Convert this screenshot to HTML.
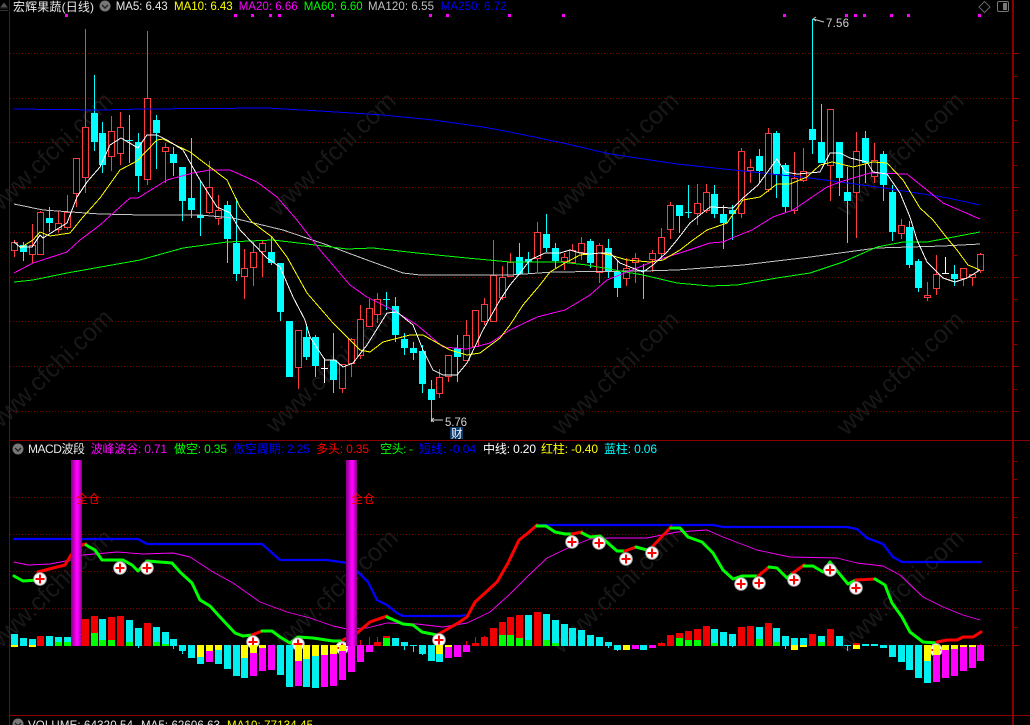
<!DOCTYPE html>
<html><head><meta charset="utf-8"><style>
html,body{margin:0;padding:0;background:#000;width:1030px;height:725px;overflow:hidden}
svg{display:block;position:absolute;left:0;top:0}
text{font-family:"Liberation Sans","Noto Sans CJK SC",sans-serif;font-size:11.5px;white-space:pre}
.wm text{font-size:25px;fill:#181818}
#ma polyline{shape-rendering:crispEdges}
</style></head><body>
<svg id="s" width="1030" height="725" viewBox="0 0 1030 725" xmlns="http://www.w3.org/2000/svg">
<defs><linearGradient id="pg" x1="0" x2="1" y1="0" y2="0"><stop offset="0" stop-color="#800080"/><stop offset=".5" stop-color="#ff00ff"/><stop offset=".62" stop-color="#ff00ff"/><stop offset="1" stop-color="#800080"/></linearGradient></defs>
<g class="wm">
<text transform="translate(55 160) rotate(-44)" text-anchor="middle">www.cfchi.com</text>
<text transform="translate(338 160) rotate(-44)" text-anchor="middle">www.cfchi.com</text>
<text transform="translate(621 160) rotate(-44)" text-anchor="middle">www.cfchi.com</text>
<text transform="translate(906 160) rotate(-44)" text-anchor="middle">www.cfchi.com</text>
<text transform="translate(55 377) rotate(-44)" text-anchor="middle">www.cfchi.com</text>
<text transform="translate(335 377) rotate(-44)" text-anchor="middle">www.cfchi.com</text>
<text transform="translate(621 379) rotate(-44)" text-anchor="middle">www.cfchi.com</text>
<text transform="translate(906 379) rotate(-44)" text-anchor="middle">www.cfchi.com</text>
<text transform="translate(55 597) rotate(-44)" text-anchor="middle">www.cfchi.com</text>
<text transform="translate(340 597) rotate(-44)" text-anchor="middle">www.cfchi.com</text>
<text transform="translate(621 597) rotate(-44)" text-anchor="middle">www.cfchi.com</text>
<text transform="translate(906 597) rotate(-44)" text-anchor="middle">www.cfchi.com</text>
</g>
<g id="grid"></g>
<g id="frame" fill="#8a0000">
<rect x="9" y="0" width="1" height="725"/>
<rect x="1012" y="0" width="2" height="725"/>
<rect x="10" y="440" width="1020" height="1"/>
<rect x="10" y="715" width="1020" height="1"/>
</g>
<g id="candles"></g>
<g id="ma" fill="none" stroke-width="1" stroke-linejoin="round"></g>
<g id="macd" fill="none" stroke-linejoin="round" stroke-linecap="round"></g>
<g id="hist"></g>
<g id="pill"></g>
<g id="sq" fill="#ff00ff"></g>

<path d="M0 8H8M4 3 1 7H7Z" fill="#555" stroke="#555" stroke-width=".6"/>
<rect x="0" y="10" width="8" height="1" fill="#333"/>
<text x="13" y="11" fill="#e8e8e8" textLength="81" style="font-size:12px">宏辉果蔬(日线)</text>
<circle cx="105" cy="6" r="5.5" fill="#777"/><path d="M102 5l3 3 3-3" fill="none" stroke="#222" stroke-width="1.4"/>
<text x="115.7" y="10" fill="#e8e8e8" textLength="52">MA5: 6.43</text>
<text x="174" y="10" fill="#ffff00" textLength="58.7">MA10: 6.43</text>
<text x="238.7" y="10" fill="#ff00ff" textLength="59">MA20: 6.66</text>
<text x="303.7" y="10" fill="#00ff00" textLength="59">MA60: 6.60</text>
<text x="368" y="10" fill="#c0c0c0" textLength="66">MA120: 6.55</text>
<text x="440.7" y="10" fill="#0000ff" textLength="66">MA250: 6.72</text>
<path d="M984.5 1.5 990 7 984.5 12.5 979 7Z" fill="none" stroke="#666"/>
<rect x="997.5" y="1.5" width="11" height="10" rx="1.5" fill="none" stroke="#777"/><rect x="1003" y="3" width="4" height="7" fill="#777"/>

<path d="M813 19 824 22M813 19l3-2M813 19l3 2" fill="none" stroke="#c8c8c8" stroke-width="1"/>
<text x="826" y="27" fill="#d0d0d0" textLength="23">7.56</text>
<path d="M431 420H443M431 420l3-2M431 420l3 2" fill="none" stroke="#d0d0d0" stroke-width="1"/>
<text x="445" y="426" fill="#d0d0d0" textLength="22">5.76</text>
<rect x="450" y="427" width="13" height="12" fill="#0b3a6b"/>
<text x="451" y="437.5" fill="#fff" style="font-size:11.5px">财</text>

<circle cx="18" cy="449" r="5.5" fill="#777"/><path d="M15 448l3 3 3-3" fill="none" stroke="#222" stroke-width="1.4"/>
<text x="28" y="453" fill="#e8e8e8" textLength="57" style="font-size:12px">MACD波段</text>
<text x="90.7" y="453" fill="#ff00ff" textLength="76.3" style="font-size:12px">波峰波谷: 0.71</text>
<text x="174" y="453" fill="#00ff00" textLength="53" style="font-size:12px">做空: 0.35</text>
<text x="233" y="453" fill="#0000ff" textLength="77" style="font-size:12px">做空周期: 2.25</text>
<text x="316" y="453" fill="#ff0000" textLength="53" style="font-size:12px">多头: 0.35</text>
<text x="380" y="453" fill="#00ff00" textLength="33" style="font-size:12px">空头: -</text>
<text x="419" y="453" fill="#0000ff" textLength="57" style="font-size:12px">短线: -0.04</text>
<text x="483" y="453" fill="#ffffff" textLength="53" style="font-size:12px">中线: 0.20</text>
<text x="541" y="453" fill="#ffff00" textLength="57" style="font-size:12px">红柱: -0.40</text>
<text x="604" y="453" fill="#00ffff" textLength="53" style="font-size:12px">蓝柱: 0.06</text>

<circle cx="18" cy="724" r="5.5" fill="#777"/><path d="M15 723l3 3 3-3" fill="none" stroke="#222" stroke-width="1.4"/>
<text x="28" y="729" fill="#e8e8e8" textLength="105">VOLUME: 64320.54</text>
<text x="141" y="729" fill="#e8e8e8" textLength="79">MA5: 62606.63</text>
<text x="227" y="729" fill="#ffff00" textLength="86">MA10: 77134.45</text>

<text x="76" y="503" fill="#ff0000" style="font-size:12px">全仓</text>
<text x="351" y="503" fill="#ff0000" style="font-size:12px">全仓</text>
</svg>
<script>
(function(){
var NS="http://www.w3.org/2000/svg",$=function(i){return document.getElementById(i)};
function el(p,t,a){var e=document.createElementNS(NS,t);for(var k in a)e.setAttribute(k,a[k]);$(p).appendChild(e);return e}
function col(i){return Math.floor(14.3+8.868*i)}
function rect(p,x,y,w,h,f){el(p,'rect',{x:x,y:y,width:w,height:Math.max(h,1),fill:f,'shape-rendering':'crispEdges'})}

/* signal squares */
[66,235,252,270,279,332,430,447,509,563,784,846,855,864,891,908,979].forEach(function(x){el('sq','rect',{x:x-1,y:14,width:3,height:3})});

/* grid */
[53,98,142,187,232,277,321,366,411,497,534,571,608,645].forEach(function(y){
 el('grid','line',{x1:10,x2:1012,y1:y+.5,y2:y+.5,stroke:'#7a0000','stroke-dasharray':'1 2','shape-rendering':'crispEdges'});
 rect('grid',1014,y,5,1,'#8a0000');
});
[76,120,165,210,255,299,344,389,461,479,517,553,590,627].forEach(function(y){rect('grid',1014,y,3,1,'#8a0000')});

/* candles: type, bodyTop, bodyBot, wickTop, wickBot */
var C=[['r',242,251,240,257],['c',245,252,242,261],['r',245,255,224,263],['r',212,255,211,255],['c',218,223,207,232],['r',223,230,211,233],['r',212,228,195,230],['r',158,194,158,207],['r',127,178,29,193],['c',113,142,75,151],
['c',133,165,122,173],['r',131,157,116,171],['r',127,154,112,165],['c',140,141,115,163],['c',142,176,133,192],['r',98,180,31,185],['c',120,133,115,169],['r',147,152,143,183],['c',154,163,147,176],['c',167,201,167,221],
['c',198,210,138,218],['c',215,218,180,236],['r',187,213,161,214],['r',210,219,195,225],['c',205,239,201,263],['c',243,274,198,281],['r',268,277,249,299],['r',252,268,242,286],['r',243,252,241,277],['c',252,263,237,265],
['c',263,312,263,321],['c',321,377,321,377],['r',330,368,330,389],['c',337,357,324,360],['c',337,366,335,377],['w',368,369,358,383],['c',360,380,333,393],['r',364,389,364,393],['r',339,364,338,377],['r',319,356,305,359],
['r',308,327,299,327],['r',299,315,293,323],['c',299,300,292,310],['c',306,335,297,342],['c',339,348,333,355],['c',348,353,342,360],['c',351,384,345,393],['c',389,400,380,422],['r',377,394,369,398],['r',355,377,355,382],
['c',348,357,335,382],['r',335,361,320,361],['r',310,347,310,347],['r',304,322,298,325],['r',275,322,240,322],['r',277,298,266,300],['r',262,277,253,277],['c',257,274,243,274],['c',259,262,252,273],['r',232,259,222,272],
['c',234,248,214,252],['c',248,261,243,268],['r',257,262,253,270],['r',250,263,244,264],['r',243,253,237,260],['c',241,263,239,268],['r',245,273,243,283],['c',248,272,239,278],['c',272,288,260,297],['r',268,279,258,286],
['r',258,263,253,283],['c',270,271,264,299],['r',253,260,250,272],['r',237,254,228,260],['r',205,230,202,239],['c',205,216,205,233],['c',212,213,185,218],['r',203,214,184,225],['r',192,211,184,213],['c',194,214,185,218],
['c',214,223,205,249],['c',210,214,205,240],['r',151,214,148,218],['r',167,171,159,183],['c',156,171,149,183],['r',133,190,128,192],['c',133,174,131,198],['c',165,207,163,212],['r',178,211,152,214],['r',171,181,148,182],
['c',129,140,19,154],['c',142,163,104,163],['r',109,166,109,201],['c',142,178,142,196],['c',192,201,167,243],['r',151,193,132,238],['c',138,163,131,183],['r',160,177,143,183],['c',154,185,151,201],['c',192,232,185,241],
['r',225,234,219,239],['c',227,265,221,268],['c',261,288,259,292],['r',295,298,282,301],['r',274,289,255,295],['w',273,274,257,274],['c',274,279,265,286],['r',268,279,268,286],['r',274,278,274,286],['r',254,271,253,273]];
var RED='#ff3c3c',CY='#00ffff';
C.forEach(function(c,i){var x=col(i),t=c[0],bt=c[1],bb=c[2],wt=c[3],wb=c[4];
 var f=t=='r'?RED:t=='c'?CY:'#fff';
 if(wt<bt)rect('candles',x,wt,1,bt-wt,f);
 if(wb>bb)rect('candles',x,bb,1,wb-bb,f);
 if(t=='r'){el('candles','rect',{x:x-2.5,y:bt+.5,width:6,height:Math.max(bb-bt-1,1),fill:'#000',stroke:f,'shape-rendering':'crispEdges'})}
 else rect('candles',x-3,bt,7,bb-bt,f);
});

/* MA lines */
function pl(g,pts,c,w){el(g,'polyline',{points:pts,stroke:c,'stroke-width':w||1})}
pl('ma','14,109 100,110 143,109 267,108 320,111 383,115 433,120 483,127 510,132 563,143 610,154 677,164 743,171 810,178 877,187 943,197 980,205','#0000ff',1);
pl('ma','14,204 43,210 100,214 143,215 200,215 233,218 283,230 327,245 367,260 403,273 420,275 510,275 553,272 643,271 677,270 743,265 810,257 877,248 943,246 980,244','#c4c4c4',1);
pl('ma','14,282 33,280 67,273 140,260 183,248 227,242 273,240 307,244 347,249 373,248 417,253 467,258 510,262 560,262 587,265 620,271 643,275 677,283 710,286 737,285 777,278 810,273 843,262 877,247 903,242 927,242 980,232','#00ff00',1);
pl('ma','14,273 33,263 67,252 80,240 100,225 130,198 138,198 167,180 193,173 210,170 230,170 257,182 277,197 297,220 307,233 320,250 350,285 367,297 393,310 417,325 443,347 467,349 490,343 510,330 537,317 565,310 590,295 607,280 627,272 657,260 683,252 710,243 723,242 732,238 752,230 773,217 793,210 827,187 840,182 870,173 907,174 943,203 980,219','#ff00ff');
pl('ma','20,248 33,240 40,232 50,236 70,233 83,217 100,198 120,170 137,161 157,140 163,139 190,152 227,180 240,207 252,222 272,237 287,257 307,293 333,323 360,350 370,352 383,342 410,335 423,335 450,350 467,355 480,353 500,338 510,325 523,305 540,285 550,272 565,263 580,255 600,253 610,255 627,260 650,262 663,260 680,250 693,240 707,230 727,223 743,200 760,197 777,184 790,184 807,177 820,165 832,162 853,167 873,162 887,163 903,180 920,208 933,220 947,238 957,250 968,265 980,270','#ffff00');
pl('ma','14,242 20,247 32,247 40,235 43,238 67,223 77,197 87,182 100,167 110,145 121,138 138,148 147,135 157,135 167,140 183,150 200,180 217,207 230,213 240,230 267,258 280,267 293,297 305,320 310,337 325,360 335,360 343,367 353,363 367,345 387,313 397,312 413,325 423,350 433,370 443,375 457,375 467,363 483,330 500,300 510,285 520,273 530,260 545,253 560,253 570,250 580,253 590,254 600,253 610,253 620,263 630,267 643,272 653,265 667,252 677,240 690,223 710,207 733,208 743,198 758,185 777,159 785,172 797,174 820,172 830,153 840,153 850,158 867,162 873,172 887,174 900,193 910,217 917,240 927,262 943,278 955,282 967,278 980,270','#ffffff');

/* MACD lines */
var mg=pl('macd','14,562 28,565 50,564 71,560 83,555 117,552 143,554 173,553 190,557 213,572 233,583 260,602 287,612 310,618 333,626 347,629 367,628 387,623 417,624 443,627 467,623 490,612 510,594 527,577 547,558 570,547 590,539 610,538 647,538 677,532 707,530 723,537 757,550 790,557 837,558 857,563 883,566 900,575 923,597 943,607 963,615 980,620','#ff00ff',.9);
pl('macd','14,539 138,539 147,544 262,544 280,560 327,560 347,563 357,571 368,582 377,600 387,605 397,613 403,616 460,616 465,615','#0000ff',2.3);
pl('macd','538,525 713,525 723,527 847,527 857,529 867,538 883,544 893,557 902,562 981,562','#0000ff',2.3);
var G='#00ff00',R='#ff0000',L=[
[G,'14,576 23,581 38,580'],[R,'38,572 53,568 65,565 71,555 82,545 86,544'],
[G,'86,545 95,550 102,560 123,560 132,565 138,571 147,561 172,563 180,572 192,583 200,600 210,606 220,617 235,633 243,636 252,635'],
[R,'252,635 262,631'],[G,'262,631 272,631 280,637 290,643 298,637 313,638 333,641 343,641'],
[R,'343,640 357,633 370,622 387,616'],[G,'387,617 403,624 413,625 422,632 437,635'],
[R,'437,635 458,623 467,617 475,602 497,582 508,563 519,540 528,533 537,525'],
[G,'537,526 546,526 555,532 565,534 572,534'],[R,'572,534 582,532'],[G,'582,533 590,537 600,536 617,551 625,551'],
[R,'625,551 636,547'],[G,'636,547 647,550 652,547'],[R,'652,547 671,527'],
[G,'671,528 680,528 688,537 702,542 713,553 723,570 733,579 742,576 758,576'],[R,'758,576 769,567'],
[G,'769,567 777,568 787,578 793,573'],[R,'793,573 804,565'],[G,'804,566 813,566 823,572 830,562 838,572 848,584 856,580'],
[R,'856,580 875,579'],[G,'875,579 885,585 892,603 902,617 910,632 923,642 937,643'],
[R,'937,642 947,640 957,640 963,637 973,637 981,632']];
L.forEach(function(l){pl('macd',l[1],l[0],3)});

/* plus markers (behind histogram) */
[[40,579],[120,568],[147,568],[253,642],[298,644],[342,648],[439,640],[572,542],[599,543],[626,559],[652,553],[741,584],[759,583],[794,580],[830,570],[856,588],[936,650]].forEach(function(p){
 el('macd','circle',{cx:p[0],cy:p[1],r:6.3,fill:'#fff',stroke:'#aaa','stroke-width':1});
 el('macd','path',{d:'M'+(p[0]-4.5)+' '+p[1]+'H'+(p[0]+4.5)+'M'+p[0]+' '+(p[1]-4.5)+'V'+(p[1]+4.5),stroke:'#ff0000','stroke-width':2,'stroke-linecap':'butt'});
});

/* histogram: lower-case = 7px wide segment, upper-case = 1px thin; z values in 3x relative to y=440 */
var H=["c582-615 y615-621","c594-618","c597-615 y615-621","r588-618","c588-618","c591-606 g606-618","c591-606 g606-618","","r537-618","r528-579 g579-618",
"c537-600 g600-618","r531-600 g600-618","r528-618","c540-606 g606-618","c564-618 C618-624","r549-618","c561-606 g606-618","c576-612 g612-618","c597-618 C618-627","c615-633 C633-642",
"c615-654","y615-651 c651-672","y615-633 m633-666","y615-630 c630-672","c615-687","c615-708","y615-654 c654-714","y615-639 m639-708","y615-624 m624-693","m615-690",
"c615-705","c615-741","y615-663 m663-738","y615-657 c657-741","y615-648 c648-744","y615-645 m645-741","y615-642 m642-738","y615-633 m633-720","m615-696","m615-666 R600-615",
"m615-636 R592-615","r606-618 R591-606","r588-594 g594-618","c594-618","c606-618 C618-630","c615-618 C618-636","c615-642 C642-645","c615-663","y615-642 c642-666","y615-621 m621-654",
"m615-651","m615-636 R603-615","r609-618 R591-609","r591-618 R588-591","r564-618","r546-585 g585-618","r531-585 g585-618","r525-594 g594-618","c525-600 g600-618","r516-618",
"c522-600 g600-618","c540-609 g609-618","c552-618","c564-618","c570-618","c585-618","c591-618","c606-618 C618-624","c615-630 C630-633","y615-630",
"m615-627","c615-630","m615-624","r609-618 R606-609","r585-618","r579-594 g594-618","r573-600 g600-618","r567-600 g600-618","r558-618","c567-609 g609-618",
"c576-618","c582-618 C618-621","r561-618","r558-618","c561-597 g597-618","r549-618","c564-606 g606-618","c588-618 C618-627","c594-615 y615-630","c594-615 y615-621",
"r582-618","c588-606 g606-618","r567-618","c588-618","c615-618 C618-633","r609-615 y615-627","c612-618","c612-618","c615-624","c615-651",
"c615-666","c615-690","c615-714","y615-663 c663-729","y615-645 m645-726","y615-630 m630-714","y615-627 m627-708","y615-621 m621-693","y615-621 m621-684","m615-663 R612-615"];
var CL={c:'#00f0f0',r:'#f00000',g:'#00ff00',y:'#ffff00',m:'#ff00ff'};
H.forEach(function(s,i){if(!s)return;var x=col(i);s.split(' ').forEach(function(p){
 var k=p[0],v=p.slice(1).split('-'),a=440+v[0]/3,b=440+v[1]/3,thin=k==k.toUpperCase();
 var f=CL[k.toLowerCase()];
 rect('hist',thin?x:x-3,Math.round(a),thin?1:7,Math.round(b)-Math.round(a),f);
})});

/* pillars */
rect('pill',71,460,11,186,'url(#pg)');
rect('pill',346,460,11,186,'url(#pg)');
})();
</script>
</body></html>
